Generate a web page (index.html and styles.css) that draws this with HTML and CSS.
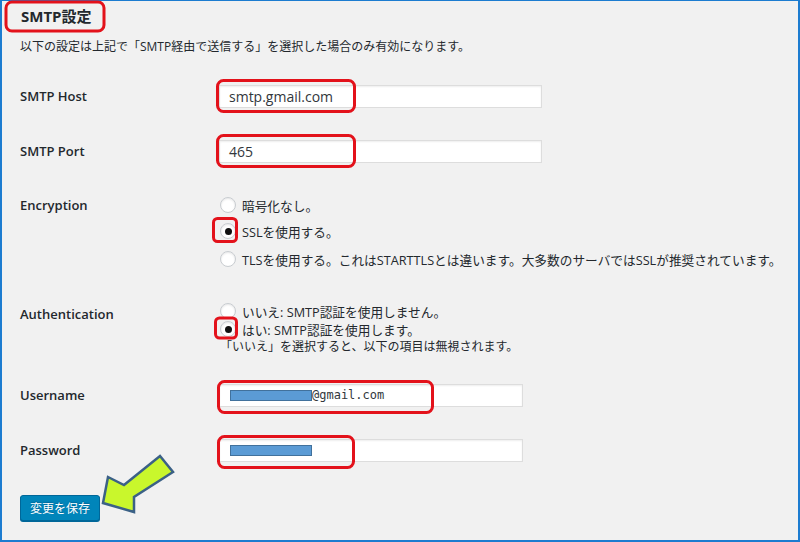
FILE: index.html
```html
<!DOCTYPE html>
<html lang="ja">
<head>
<meta charset="utf-8">
<title>SMTP設定</title>
<link rel="stylesheet" href="styles.css">
</head>
<body>
<div class="page">
  <div class="frame">
    <h2 class="title">SMTP設定</h2>
    <p class="desc">以下の設定は上記で「SMTP経由で送信する」を選択した場合のみ有効になります。</p>

    <div class="row row-host">
      <div class="label">SMTP Host</div>
      <div class="field"><div class="input wide">smtp.gmail.com</div></div>
    </div>

    <div class="row row-port">
      <div class="label">SMTP Port</div>
      <div class="field"><div class="input wide">465</div></div>
    </div>

    <div class="row row-enc">
      <div class="label">Encryption</div>
      <div class="field radios">
        <label class="opt"><span class="radio"></span>暗号化なし。</label>
        <label class="opt"><span class="radio on"></span>SSLを使用する。</label>
        <label class="opt opt-last"><span class="radio"></span>TLSを使用する。これはSTARTTLSとは違います。大多数のサーバではSSLが推奨されています。</label>
      </div>
    </div>

    <div class="row row-auth">
      <div class="label">Authentication</div>
      <div class="field radios tight">
        <label class="opt"><span class="radio"></span>いいえ: SMTP認証を使用しません。</label>
        <label class="opt"><span class="radio on"></span>はい: SMTP認証を使用します。</label>
        <p class="note">「いいえ」を選択すると、以下の項目は無視されます。</p>
      </div>
    </div>

    <div class="row row-user">
      <div class="label">Username</div>
      <div class="field"><div class="input narrow mono"><span class="mask"></span>@gmail.com</div></div>
    </div>

    <div class="row row-pass">
      <div class="label">Password</div>
      <div class="field"><div class="input narrow"><span class="mask"></span></div></div>
    </div>

    <button class="save" type="button">変更を保存</button>
  </div>

  <svg class="marks" width="800" height="542" viewBox="0 0 800 542">
    <g fill="none" stroke="#e3121b" stroke-width="3">
      <rect x="6" y="2" width="98" height="29" rx="6"/>
      <rect x="217.5" y="80.5" width="137" height="31" rx="6"/>
      <rect x="217.5" y="135.5" width="137" height="31" rx="6"/>
      <rect x="213.5" y="218.5" width="23" height="23" rx="4"/>
      <rect x="215.5" y="318" width="21" height="20" rx="4"/>
      <rect x="218.5" y="381.5" width="214" height="31" rx="6"/>
      <rect x="218.5" y="436.5" width="135" height="31" rx="6"/>
    </g>
    <polygon points="103,503 108,477 124,485 160,456 173,472 134,497 134,512"
             fill="#c9f72c" stroke="#3b6186" stroke-width="2.5" stroke-linejoin="miter"/>
  </svg>
</div>
</body>
</html>
```

FILE: styles.css
```css
* { box-sizing: border-box; }

html, body {
  margin: 0;
  padding: 0;
}

body {
  font-family: "Open Sans", "Noto Sans CJK JP", sans-serif;
  color: #23282d;
  background: #f1f1f1;
}

.page {
  position: relative;
  width: 800px;
  height: 542px;
  overflow: hidden;
}

.frame {
  width: 800px;
  height: 542px;
  background: #f1f1f1;
  border: 2px solid #1c7cd0;
  border-top-width: 1px;
  padding-left: 18px;
}

.title {
  margin: 5px 0 0;
  font-size: 15px;
  line-height: 20px;
  font-weight: 700;
  padding-left: 1px;
}

.desc {
  margin: 12px 0 0;
  font-size: 12px;
  line-height: 18px;
}

.row {
  display: flex;
  align-items: flex-start;
}

.label {
  width: 199px;
  flex: none;
  font-size: 13px;
  font-weight: 600;
  line-height: 23px;
}

.field {
  flex: 1;
}

.row-host { margin-top: 29px; }
.row-port { margin-top: 32px; }
.row-enc  { margin-top: 29px; }
.row-auth { margin-top: 30px; }
.row-user { margin-top: 28px; }
.row-pass { margin-top: 32px; }

.row-enc .label { line-height: 26px; }
.row-auth .label { line-height: 18px; padding-top: 3px; }

.input {
  height: 23px;
  background: #fff;
  border: 1px solid #dddddd;
  box-shadow: inset 0 1px 2px rgba(0, 0, 0, 0.07);
  font-size: 14px;
  line-height: 21px;
  padding-left: 9px;
  color: #32373c;
  display: flex;
  align-items: center;
}

.wide { width: 323px; }
.narrow { width: 304px; }

.mono {
  font-family: "DejaVu Sans Mono", monospace;
  font-size: 12px;
}

.mask {
  display: inline-block;
  width: 82px;
  height: 11px;
  background: #5b9bd5;
  border: 1px solid #41719c;
  margin-left: 1px;
}

.radios {
  font-size: 12.7px;
}

.opt {
  display: flex;
  align-items: center;
  height: 26px;
  white-space: nowrap;
}

.opt-last { margin-top: 2px; }

.tight .opt { height: 18px; }

.radio {
  width: 16px;
  height: 16px;
  flex: none;
  border-radius: 50%;
  background: #fff;
  border: 1px solid #c8ccd0;
  box-shadow: inset 0 1px 2px rgba(0, 0, 0, 0.1);
  margin: 0 6px 0 1px;
  display: flex;
  align-items: center;
  justify-content: center;
}

.radio.on::after {
  content: "";
  width: 7px;
  height: 7px;
  border-radius: 50%;
  background: #111;
}

.note {
  margin: 0 0 0 1px;
  line-height: 18px;
  font-size: 12px;
}

.save {
  display: block;
  margin-top: 33px;
  height: 26px;
  width: 80px;
  padding: 0;
  font-family: "Open Sans", "Noto Sans CJK JP", sans-serif;
  font-size: 12px;
  color: #fff;
  background: #0085ba;
  border: 1px solid #006799;
  border-radius: 3px;
  box-shadow: 0 1px 0 #006799;
  text-shadow: 0 -1px 1px #006799;
}

.marks {
  position: absolute;
  left: 0;
  top: 0;
  pointer-events: none;
}
```
